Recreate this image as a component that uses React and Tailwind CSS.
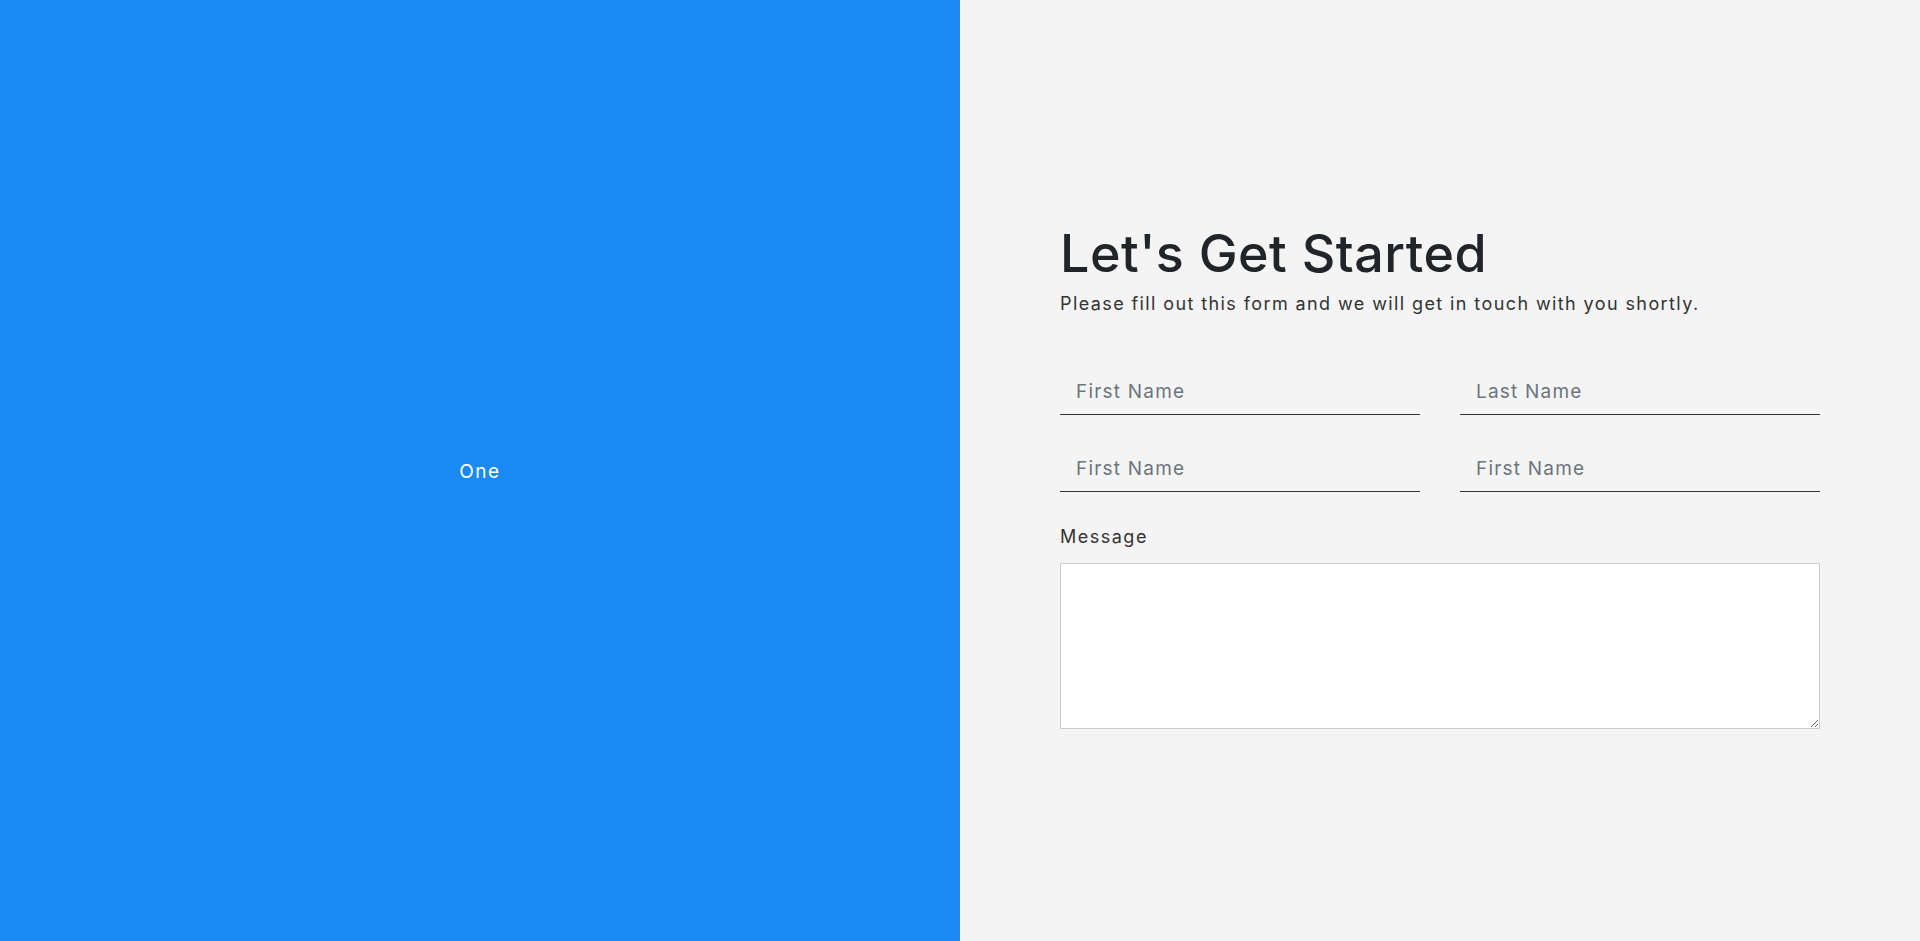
import React from 'react';

const font = { fontFamily: "Inter, 'DejaVu Sans', sans-serif" };

const Field = ({ placeholder }) => (
  <input
    type="text"
    placeholder={placeholder}
    className="w-full h-[46px] bg-transparent border-0 border-b border-[#333] px-[16px] text-[19px] tracking-[1.2px] text-[#212529] placeholder:text-[#6c757d] outline-none"
  />
);

const App = () => {
  return (
    <div className="flex h-[941px] w-full" style={font}>
      <div className="w-1/2 bg-[#1a8af2] flex items-center justify-center">
        <span className="text-white text-[19px] tracking-[1.5px] pt-[3px]">One</span>
      </div>

      <div className="w-1/2 bg-[#f4f4f4] flex flex-col justify-center px-[100px] pt-[10px]">
        <h1 className="text-[52px] font-medium leading-[62px] text-[#212529] tracking-[0.5px]">Let's Get Started</h1>
        <p className="mt-[5px] text-[18px] leading-[27px] text-[#333] tracking-[1.4px]">
          Please fill out this form and we will get in touch with you shortly.
        </p>

        <form className="mt-[52px]">
          <div className="grid grid-cols-2 gap-x-10 gap-y-[31px]">
            <Field placeholder="First Name" />
            <Field placeholder="Last Name" />
            <Field placeholder="First Name" />
            <Field placeholder="First Name" />
          </div>

          <label className="block mt-[31px] mb-[13px] text-[18px] leading-[27px] text-[#333] tracking-[1.5px]">Message</label>
          <textarea className="block w-full h-[166px] bg-white border border-[#ccc] outline-none p-2"></textarea>
        </form>
      </div>
    </div>
  );
};

export default App;
